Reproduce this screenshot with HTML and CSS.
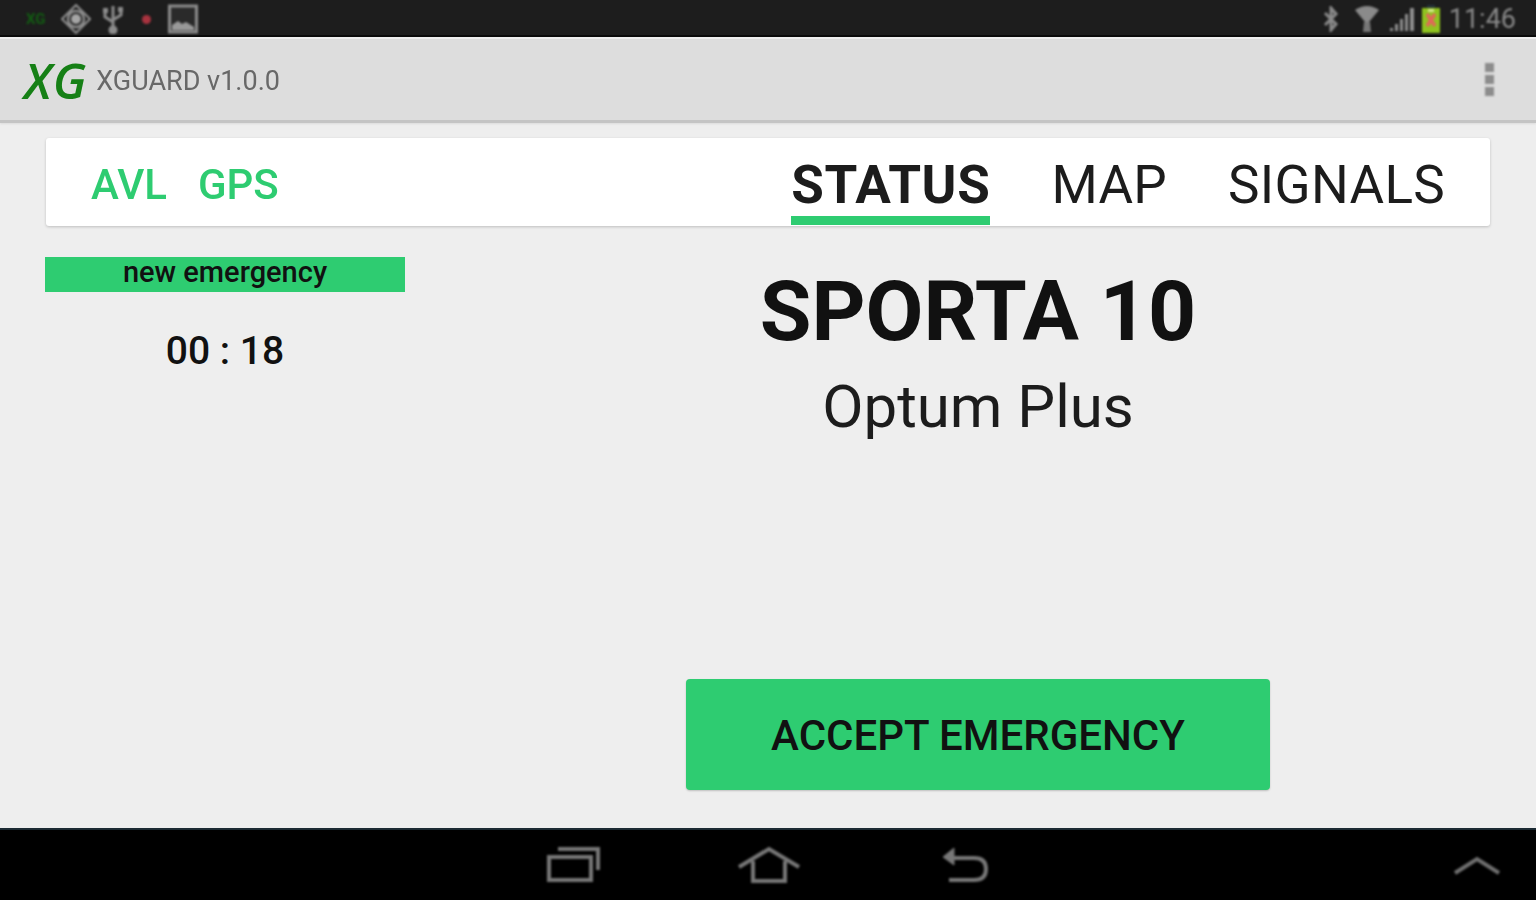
FILE: index.html
```html
<!DOCTYPE html>
<html>
<head>
    <title>XGUARD</title>
    <link rel="stylesheet" href="styles.css">
</head>
<body>
    <div class="status-bar">
        <div class="status-left">
            <span class="status-xg">XG</span>
            <svg class="st-icon" width="30" height="30" viewBox="0 0 30 30" fill="none" stroke="#8f8f8f"><path d="M15 1 L29 15 L15 29 L1 15 Z" stroke-width="2"/><circle cx="15" cy="15" r="8" stroke-width="2.5"/><circle cx="15" cy="15" r="5" fill="#a5a5a5" stroke="none"/></svg>
            <svg class="st-icon usb" width="22" height="30" viewBox="0 0 22 30" fill="none" stroke="#8c8c8c" stroke-width="3"><path d="M11 2v24M3 8v5l8 5M19 6v5l-8 5"/><circle cx="11" cy="26" r="3" fill="#8c8c8c"/><rect x="1" y="4" width="5" height="5" fill="#8c8c8c" stroke="none"/><rect x="16" y="3" width="5" height="5" fill="#8c8c8c" stroke="none"/></svg>
            <span class="rec-dot"></span>
            <svg class="st-icon pic" width="30" height="30" viewBox="0 0 30 30" fill="none"><rect x="1.5" y="2" width="27" height="26" stroke="#8c8c8c" stroke-width="3" fill="#2a2a2a"/><path d="M4 26 L4 21 L10 17 L14 20 L18 18 L26 23 L26 26 Z" fill="#999"/></svg>
        </div>
        <div class="status-right">
            <svg class="bt" width="18" height="26" viewBox="0 0 18 26" fill="none" stroke="#8a8a8a" stroke-width="3"><path d="M3 7 L14 18 L9 24 V2 L14 8 L3 19"/></svg>
            <svg class="wifi" width="26" height="28" viewBox="0 0 26 28"><path d="M1 5 Q13 -3 25 5 L15 17 H11 Z" fill="#8a8a8a"/><path d="M10 17 H16 L17 27 H9 Z" fill="#777"/></svg>
            <svg class="signal" width="26" height="26" viewBox="0 0 26 26" fill="#8f8f8f"><path d="M1 22h3v3H1zM6 18h3v7H6zM11 13h3v12h-3zM16 8h3v17h-3zM21 2h4v23h-4z"/></svg>
            <svg class="battery" width="20" height="28" viewBox="0 0 20 28"><rect x="6" y="0" width="8" height="3" fill="#26323a"/><rect x="1" y="3" width="18" height="25" fill="#8fc31f"/><path d="M6 9 L14 21 M14 9 L6 21" stroke="#e2665a" stroke-width="3.5"/><rect x="7" y="4" width="6" height="3" fill="#d4e88c"/></svg>
            <span class="clock">11:46</span>
        </div>
    </div>

    <header class="action-bar">
        <div class="brand">
            <span class="logo">XG</span>
            <span class="app-title">XGUARD v1.0.0</span>
        </div>
        <div class="overflow"><span></span><span></span><span></span></div>
    </header>

    <main class="content">
        <nav class="tab-card">
            <div class="tab-left">
                <span>AVL</span>
                <span>GPS</span>
            </div>
            <div class="tab-right">
                <span class="tab active">STATUS</span>
                <span class="tab">MAP</span>
                <span class="tab">SIGNALS</span>
            </div>
        </nav>

        <div class="panels">
            <section class="side">
                <div class="alert-bar">new emergency</div>
                <div class="timer">00 : 18</div>
            </section>
            <section class="detail">
                <h1>SPORTA 10</h1>
                <p>Optum Plus</p>
                <button class="accept">ACCEPT EMERGENCY</button>
            </section>
        </div>
    </main>

    <footer class="nav-bar">
        <div class="nav-keys">
            <svg width="58" height="40" viewBox="0 0 58 40" fill="none" stroke="#777" stroke-width="4"><rect x="3" y="12" width="42" height="23"/><path d="M12 4 H52 V25"/></svg>
            <svg class="home-key" width="64" height="40" viewBox="0 0 64 40" fill="none" stroke="#777" stroke-width="4"><path d="M2 22 L32 4 L62 22"/><path d="M16 16 V36 H48 V16"/></svg>
            <svg width="50" height="40" viewBox="0 0 50 40" fill="none" stroke="#777" stroke-width="4"><path d="M10 13 H34 Q46 13 46 24 Q46 35 34 35 H9"/><path d="M14 3 L3 12 L14 20 Z" fill="#777" stroke-width="1"/></svg>
        </div>
        <svg class="nav-up" width="48" height="22" viewBox="0 0 48 22" fill="none" stroke="#6f6f6f" stroke-width="4"><path d="M2 18 L24 4 L46 18"/></svg>
    </footer>
</body>
</html>
```

FILE: styles.css
```css
* {
    box-sizing: border-box;
    margin: 0;
    padding: 0;
}

html, body {
    height: 100%;
}

body {
    width: 1536px;
    height: 900px;
    overflow: hidden;
    display: flex;
    flex-direction: column;
    font-family: Roboto, 'Liberation Sans', sans-serif;
    background-color: #eeeeee;
    color: #111111;
}

.status-bar {
    height: 37px;
    flex: none;
    background-color: #1d1d1d;
    display: flex;
    justify-content: space-between;
    align-items: center;
    padding: 3px 20px 0 26px;
    border-bottom: 2px solid #0b0b0b;
}

.status-left, .status-right {
    display: flex;
    align-items: center;
    filter: blur(1px);
}

.status-xg {
    color: #125c12;
    font-size: 15px;
    font-weight: 700;
    width: 35px;
}

.usb {
    margin-left: 11px;
}

.rec-dot {
    width: 9px;
    height: 9px;
    border-radius: 50%;
    background-color: #a8333f;
    margin: 0 17px 0 18px;
}

.status-right .bt {
    margin-right: 14px;
}

.status-right .wifi {
    margin-right: 9px;
}

.status-right .signal {
    margin-right: 6px;
}

.status-right .battery {
    margin-right: 8px;
}

.clock {
    color: #8a8a8a;
    font-size: 27px;
    line-height: 30px;
}

.action-bar {
    height: 86px;
    flex: none;
    background-color: #dddddd;
    border-top: 2px solid #eeeeee;
    border-bottom: 3px solid #c4c4c4;
    box-shadow: 0 1px 2px rgba(0,0,0,0.08);
    display: flex;
    justify-content: space-between;
    align-items: center;
    padding: 0 42px 0 24px;
}

.brand {
    display: flex;
    align-items: center;
    gap: 9px;
    filter: blur(0.7px);
}

.logo {
    color: #168016;
    font-family: 'Open Sans', sans-serif;
    font-size: 49px;
    font-style: italic;
    font-weight: 600;
    letter-spacing: 1px;
    line-height: 50px;
}

.app-title {
    color: #686868;
    font-size: 27px;
    margin-top: 2px;
}

.overflow {
    display: flex;
    flex-direction: column;
    gap: 3px;
    filter: blur(1px);
}

.overflow span {
    width: 9px;
    height: 9px;
    background-color: #8c8c8c;
}

.content {
    flex: 1;
    padding: 15px 46px 0;
    display: flex;
    flex-direction: column;
}

.tab-card {
    height: 88px;
    flex: none;
    background-color: #ffffff;
    border-radius: 3px;
    box-shadow: 0 1px 3px rgba(0,0,0,0.2);
    display: flex;
    justify-content: space-between;
    align-items: stretch;
    padding: 0 45px 0 45px;
}

.tab-left {
    display: flex;
    gap: 31px;
    align-items: center;
    padding-top: 4px;
    color: #2ecc71;
    font-size: 42px;
    font-weight: 500;
    filter: blur(0.4px);
}

.tab-right {
    display: flex;
    gap: 61px;
}

.tab {
    display: flex;
    align-items: center;
    color: #1c1c1c;
    border-bottom: 9px solid transparent;
    margin-bottom: 1px;
    padding-top: 16px;
    font-size: 53px;
    letter-spacing: 0.3px;
}

.tab.active {
    font-weight: 700;
    letter-spacing: 0.6px;
    border-bottom-color: #2ecc71;
}

.panels {
    flex: 1;
    display: flex;
}

.side {
    width: 360px;
    flex: none;
    padding-top: 31px;
    margin-left: -1px;
}

.alert-bar {
    height: 35px;
    background-color: #2ecc71;
    text-align: center;
    font-size: 29px;
    font-weight: 500;
    line-height: 31px;
}

.timer {
    margin-top: 36px;
    text-align: center;
    font-size: 39px;
    font-weight: 500;
    line-height: 46px;
}

.detail {
    flex: 1;
    display: flex;
    flex-direction: column;
    align-items: center;
    padding-top: 40px;
    margin-left: 61px;
}

.detail h1 {
    font-size: 84px;
    font-weight: 700;
    line-height: 92px;
    color: #111111;
}

.detail p {
    font-size: 60px;
    line-height: 68px;
    margin-top: 15px;
    color: #1c1c1c;
}

.accept {
    margin-top: auto;
    margin-bottom: 38px;
    width: 584px;
    height: 111px;
    padding-top: 2px;
    border: none;
    border-radius: 4px;
    background-color: #2ecc71;
    box-shadow: 0 1px 2px rgba(0,0,0,0.2);
    color: #111111;
    font-family: inherit;
    font-size: 42px;
    font-weight: 500;
}

.nav-bar {
    height: 72px;
    flex: none;
    position: relative;
    background-color: #000000;
    border-top: 2px solid #1c2a33;
    display: flex;
    justify-content: center;
    align-items: center;
}

.nav-keys {
    display: flex;
    align-items: center;
    gap: 136px;
    filter: blur(0.8px);
}

.home-key {
    margin-left: -3px;
    margin-right: 3px;
}

.nav-up {
    position: absolute;
    right: 35px;
    top: 25px;
    filter: blur(0.8px);
}
```
